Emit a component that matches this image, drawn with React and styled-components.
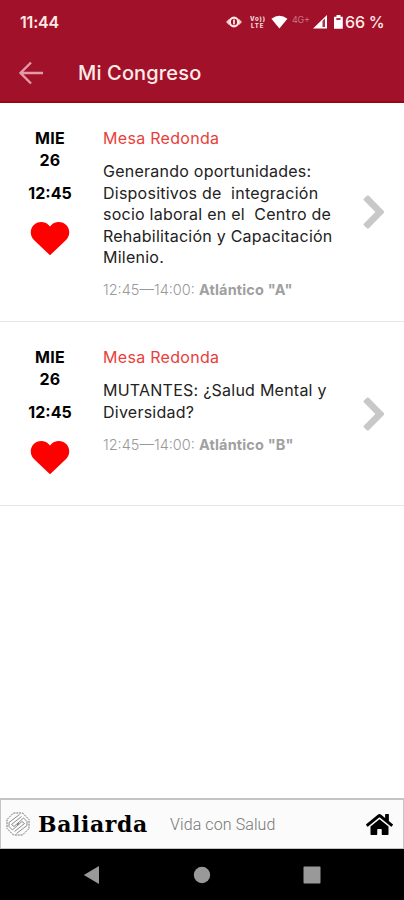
import React from 'react';
import styled, { createGlobalStyle } from 'styled-components';
import { FaHome } from 'react-icons/fa';

const SESSIONS = [
    {
        id: 1,
        day: 'MIE',
        date: '26',
        hour: '12:45',
        type: 'Mesa Redonda',
        title: 'Generando oportunidades: Dispositivos de  integración socio laboral en el  Centro de Rehabilitación y Capacitación Milenio.',
        range: '12:45—14:00:',
        room: 'Atlántico "A"',
        height: 219
    },
    {
        id: 2,
        day: 'MIE',
        date: '26',
        hour: '12:45',
        type: 'Mesa Redonda',
        title: 'MUTANTES: ¿Salud Mental y Diversidad?',
        range: '12:45—14:00:',
        room: 'Atlántico "B"',
        height: 184
    }
];

function StatusIcons() {
    return (
        <svg width="118" height="18" viewBox="0 0 118 18" fill="#fff">
            {/* eye */}
            <path d="M0 9 L3.4 5.5 V12.5Z M16 9 L12.6 5.5 V12.5Z" opacity=".75" />
            <ellipse cx="8" cy="9" rx="4.2" ry="4.4" fill="none" stroke="#ffe9e6" strokeWidth="2.2" />
            <rect x="7.2" y="6.5" width="1.6" height="5" />
            {/* volte */}
            <g fontFamily="Inter, sans-serif" fontWeight="800" fontSize="6" opacity=".85">
                <text x="24" y="8" textLength="15">Vo))</text>
                <text x="25" y="15.3" textLength="12.5">LTE</text>
            </g>
            {/* wifi */}
            <path d="M45.4 5.8 Q53.4 -.4 61.4 5.8 L53.4 15.5Z" />
            <text x="66" y="9.6" fontFamily="Inter, sans-serif" fontSize="9" textLength="18" opacity=".4">4G+</text>
            {/* signal */}
            <path d="M101 2 V15.5 H87Z" />
            <path d="M96.5 8 L99 5.5 V14 H96.5Z" fill="#a8324a" />
            {/* battery */}
            <path d="M110.5 2h4v1.8h2.3v11.9h-8.8V3.8h2.5z" />
            <rect x="110.3" y="5" width="4.2" height="2" fill="#a8324a" />
        </svg>
    )
}

function Session({ session }) {
    return (
        <Row $height={session.height}>
            <When>
                <Day>{session.day}</Day>
                <Day>{session.date}</Day>
                <Hour>{session.hour}</Hour>
                <svg width="40" height="35" viewBox="0 0 40 35">
                    <path
                        fill="#fe0000"
                        d="M20 34.2 L17.6 32.1 L4.2 19.3 C-.1 14.8 -.3 8.5 3.3 4.4 C7.2 .1 14.7 -.2 18.3 3.7 L20 5.4 L21.7 3.7 C25.3 -.2 32.8 .1 36.7 4.4 C40.3 8.5 40.1 14.8 35.8 19.3 L22.4 32.1Z"
                    />
                </svg>
            </When>
            <Info>
                <Type>{session.type}</Type>
                <Title>{session.title}</Title>
                <Place>{session.range} <Room>{session.room}</Room></Place>
            </Info>
            <Chevron>
                <svg width="22" height="34" viewBox="0 0 22 34">
                    <path
                        fill="#c8c8c8"
                        d="M.8 5.3 Q0 4.5 .8 3.7 L3.8 .8 Q4.8 0 5.8 .8 L20.8 15.9 Q21.8 17 20.8 18.1 L5.8 33.2 Q4.8 34 3.8 33.2 L.8 30.3 Q0 29.5 .8 28.7 L12.4 17Z"
                    />
                </svg>
            </Chevron>
        </Row>
    )
}

function App() {
    return (
        <Screen>
            <GlobalStyle />

            <Header>
                <StatusBar>
                    <Clock>11:44</Clock>
                    <StatusIcons />
                    <Battery>66 %</Battery>
                </StatusBar>
                <TitleBar>
                    <svg width="26" height="24" viewBox="0 0 26 24" fill="none" stroke="#e29aa8" strokeWidth="2.4">
                        <path d="M25 12 H3 M13 1.5 L2.5 12 L13 22.5" />
                    </svg>
                    <Heading>Mi Congreso</Heading>
                </TitleBar>
            </Header>

            <List>
                {SESSIONS.map((session) => (
                    <Session key={session.id} session={session} />
                ))}
            </List>

            <Sponsor>
                <svg width="24" height="24" viewBox="0 0 24 24" fill="none" stroke="#808080" strokeWidth=".9">
                    <path d="M7.5 1 H16.5 L23 7.5 V16.5 L16.5 23 H7.5 L1 16.5 V7.5Z" stroke="#666" strokeDasharray="2 .8" />
                    <path d="M13.5 2.5 L3 10.5 V14.5 L6.5 18 L12.5 12.5 V10.5 L8 14.5 L5.5 12.5 L15.5 4.5" />
                    <path d="M10.5 21.5 L21 13.5 V9.5 L17.5 6 L11.5 11.5 V13.5 L16 9.5 L18.5 11.5 L8.5 19.5" />
                </svg>
                <Brand>Baliarda</Brand>
                <Slogan>Vida con Salud</Slogan>
                <FaHome size={27} color="#000" />
            </Sponsor>

            <NavBar>
                <svg width="17" height="20" viewBox="0 0 17 20"><path d="M.8 10 L16 1 V19Z" fill="#999" /></svg>
                <svg width="18" height="18" viewBox="0 0 18 18"><circle cx="9" cy="9" r="8.2" fill="#999" /></svg>
                <svg width="18" height="18" viewBox="0 0 18 18"><rect x=".5" y=".5" width="17" height="17" rx="1" fill="#999" /></svg>
            </NavBar>
        </Screen>
    )
}

export default App;

const GlobalStyle = createGlobalStyle`
    * {
        box-sizing: border-box;
    }

    body {
        margin: 0;
        background-color: #fff;
        font-family: Inter, "Liberation Sans", sans-serif;
    }

    svg {
        display: block;
        flex-shrink: 0;
    }
`

const Screen = styled.div`
    width: 404px;
    height: 900px;
    display: flex;
    flex-direction: column;
    overflow: hidden;
    background-color: #fff;
`

const Header = styled.header`
    height: 103px;
    flex-shrink: 0;
    background-color: #a11129;
    border-bottom: 2px solid #960714;
    color: #fff;
`

const StatusBar = styled.div`
    height: 44px;
    padding: 0 19px 0 20px;
    display: flex;
    align-items: center;
`

const Clock = styled.span`
    margin-right: auto;
    font-size: 16px;
    font-weight: 600;
    letter-spacing: -.2px;
    color: #ffe9e6;
`

const Battery = styled.span`
    width: 40px;
    margin-left: 1px;
    font-size: 16px;
    font-weight: 500;
    letter-spacing: -.2px;
    white-space: nowrap;
    color: #ffe9e6;
`

const TitleBar = styled.div`
    height: 58px;
    padding-left: 18px;
    display: flex;
    align-items: center;
    gap: 34px;
`

const Heading = styled.h1`
    margin: 0;
    font-size: 20px;
    font-weight: 500;
    letter-spacing: .15px;
    color: #ffebe8;
`

const List = styled.main`
    flex: 1;
`

const Row = styled.div`
    height: ${(props) => props.$height}px;
    padding-top: 25px;
    display: flex;
    border-bottom: 1px solid #e6e6e6;
`

const When = styled.div`
    width: 100px;
    display: flex;
    flex-direction: column;
    align-items: center;
    font-size: 16px;
    font-weight: 700;
    line-height: 21.5px;
    color: #000;
`

const Day = styled.span`
    letter-spacing: .3px;
`

const Hour = styled.span`
    margin: 12px 0 16px;
`

const Info = styled.div`
    width: 240px;
    padding-left: 3px;
    font-size: 16px;
    line-height: 21.4px;
`

const Type = styled.div`
    letter-spacing: .3px;
    color: #e8403a;
`

const Title = styled.div`
    margin-top: 12px;
    letter-spacing: .24px;
    white-space: pre-wrap;
    color: #222;
`

const Place = styled.div`
    margin-top: 11px;
    font-size: 14.5px;
    font-weight: 300;
    white-space: nowrap;
    color: #999;
`

const Room = styled.span`
    font-weight: 700;
    letter-spacing: .15px;
    color: #a0a0a0;
`

const Chevron = styled.div`
    margin: -25px 0 0 23px;
    display: flex;
    align-items: center;
`

const Sponsor = styled.div`
    height: 51px;
    flex-shrink: 0;
    padding: 0 10px 0 5px;
    display: flex;
    align-items: center;
    border: 1px solid #c4c4c4;
    border-top-width: 2px;
    background-color: #fbfbfb;
`

const Brand = styled.span`
    width: 111px;
    margin-left: 8px;
    font-family: "DejaVu Serif", serif;
    font-size: 22px;
    font-weight: 700;
    letter-spacing: .6px;
    color: #000;
`

const Slogan = styled.span`
    margin: 0 auto 0 21px;
    font-family: Roboto, sans-serif;
    font-size: 16px;
    font-weight: 300;
    letter-spacing: .1px;
    color: #777;
`

const NavBar = styled.nav`
    height: 51px;
    flex-shrink: 0;
    padding: 0 83px;
    display: flex;
    align-items: center;
    justify-content: space-between;
    background-color: #000;
`
